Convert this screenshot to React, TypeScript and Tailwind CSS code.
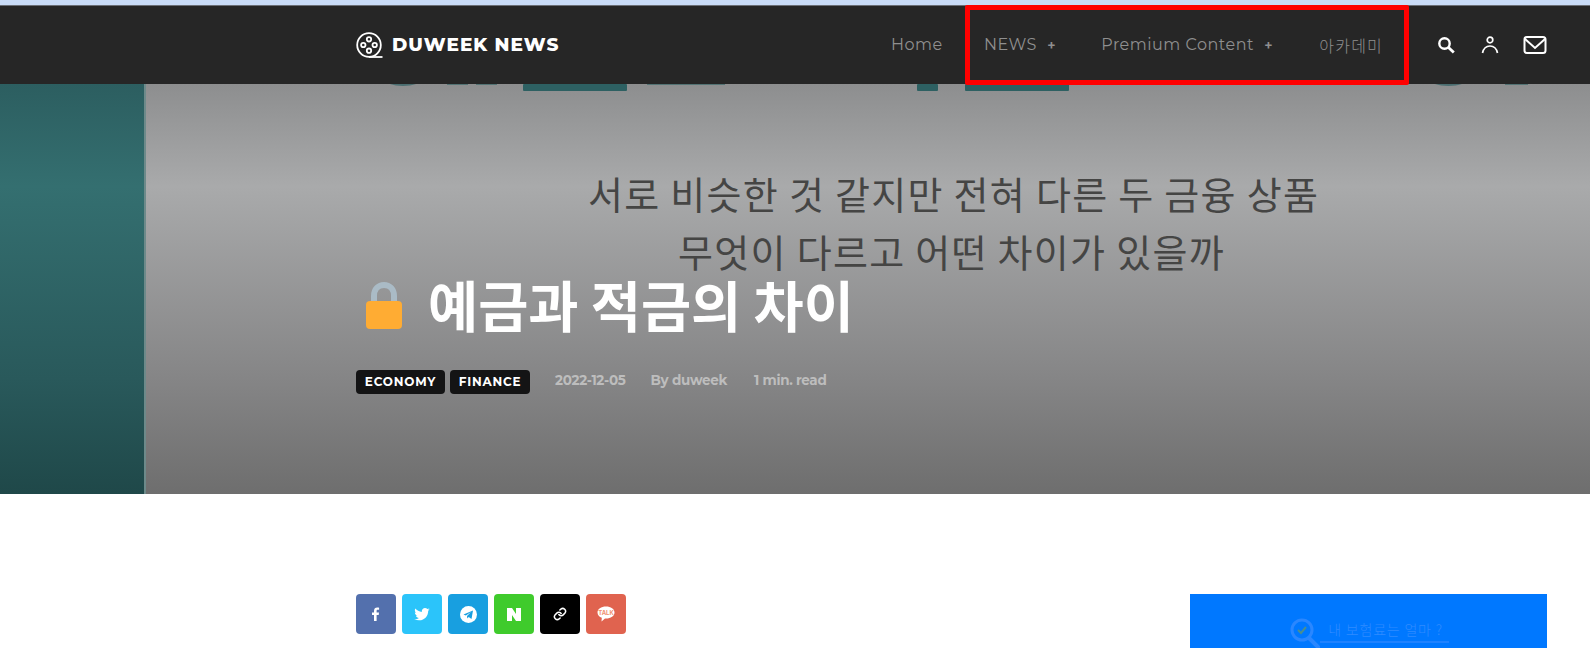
import React from "react";

function Logo() {
  return (
    <svg width="27" height="27" viewBox="0 0 27 27" fill="none" stroke="white" strokeWidth="1.8">
      <circle cx="13" cy="13" r="11.8" />
      <path d="M13 25H26.500" />
      <circle cx="13" cy="7.300" r="2.200" />
      <circle cx="13" cy="18.700" r="2.200" />
      <circle cx="7.300" cy="13" r="2.200" />
      <circle cx="18.700" cy="13" r="2.200" />
    </svg>
  );
}

function Social({ bg, children }: { bg: string; children: React.ReactNode }) {
  return <div className={`flex h-10 w-10 items-center justify-center rounded-sm ${bg}`}>{children}</div>;
}

export default function App() {
  return (
    <div className="flex h-[648px] w-[1590px] flex-col overflow-hidden bg-white font-['Inter','Noto_Sans_CJK_KR',sans-serif]">
      <div className="h-[5px] bg-[#c9dcf7]" />
      <div className="h-px bg-[#6b6f76]" />
      <header className="relative z-10 flex h-[78px] items-center bg-[#262626] pl-[356px]">
        <Logo />
        <span className="ml-[9px] font-['Montserrat','Inter',sans-serif] text-[18.5px] font-extrabold tracking-[1px] text-white">DUWEEK NEWS</span>
        <nav className="absolute left-[891px] top-0 flex h-full items-center text-[16px] tracking-[0.5px] text-[#8f8f8f] font-['Montserrat','Noto_Sans_CJK_KR',sans-serif]">
          <span className="mb-[1px] w-[52px]">Home</span>
          <div className="relative ml-[22px] flex h-full w-[444px] items-center pl-[19px]">
            <span className="mb-[1px]">NEWS</span>
            <span className="mb-[1px] ml-[10px] font-['Inter',sans-serif] text-[13px] font-bold">+</span>
            <span className="mb-[1px] ml-[45px]">Premium Content</span>
            <span className="mb-[1px] ml-[10px] font-['Inter',sans-serif] text-[13px] font-bold">+</span>
            <span className="mb-[1px] ml-[46px] font-['Noto_Sans_CJK_KR',sans-serif] text-[16px] font-light tracking-[1.200px]">아카데미</span>
            <div className="absolute -bottom-px -top-px left-0 right-0 rounded-[2px] border-[5px] border-[#ff0000]" />
          </div>
          <div className="ml-[28px] flex items-center">
            <svg width="18" height="18" viewBox="0 0 18 18" fill="none" stroke="white">
              <circle cx="7.500" cy="7.500" r="5.200" strokeWidth="2.400" />
              <path d="M11.500 11.500L16.800 16.500" strokeWidth="2.800" />
            </svg>
            <svg width="18" height="18" viewBox="0 0 18 18" fill="none" stroke="white" strokeWidth="1.700" className="ml-[26px]">
              <circle cx="9" cy="4" r="2.800" />
              <path d="M1.500 17C2.500 12.500 5.500 10 9 10S15.500 12.500 16.500 17" />
            </svg>
            <svg width="24" height="18" viewBox="0 0 24 18" fill="none" stroke="white" strokeWidth="2" className="ml-[24px]">
              <rect x="1.500" y="1" width="21" height="16" rx="2.500" />
              <path d="M2 3L12 12L22 3" />
            </svg>
          </div>
        </nav>
      </header>

      <section className="relative h-[410px] overflow-hidden bg-[linear-gradient(180deg,#8d8e8f_0%,#a9aaab_25%,#858586_72%,#6e6e6e_100%)]">
        <div className="absolute inset-y-0 left-0 w-[146px] border-r-2 border-[#6d8a8a] bg-[linear-gradient(180deg,#2c5e60_0%,#346f70_25%,#29595b_72%,#1f4849_100%)]" />
        <svg className="absolute left-0 top-0" width="1590" height="10" viewBox="0 0 1590 10" fill="#2d6062">
          <path d="M390 0H416C409 2.500 397 2.500 390 0Z" opacity="0.7" />
          <rect x="447" width="21" height="1" opacity="0.6" />
          <rect x="476" width="21" height="1" opacity="0.6" />
          <rect x="523" width="104" height="7" rx="1" />
          <rect x="647" width="78" height="1" opacity="0.6" />
          <rect x="917" width="21" height="7" rx="1" />
          <rect x="965" width="104" height="7" rx="1" />
          <path d="M1435 0H1462C1455 2.500 1442 2.500 1435 0Z" opacity="0.7" />
          <rect x="1505" width="23" height="1" opacity="0.6" />
        </svg>
        <div className="absolute left-[588px] top-[80px] w-[727px] text-center text-[38px] font-normal leading-[58px] tracking-[1.300px] text-[#454544] font-['Noto_Sans_CJK_KR',sans-serif]">
          <div className="whitespace-nowrap">서로 비슷한 것 같지만 전혀 다른 두 금융 상품</div>
          <div className="whitespace-nowrap">무엇이 다르고 어떤 차이가 있을까</div>
        </div>

        <div className="relative ml-[356px] flex h-full flex-col">
          <div className="mt-[190px] flex items-center">
            <svg width="38" height="48" viewBox="0 0 38 48" className="ml-[10px] mt-[4px]">
              <path d="M8 22V14C8 7 12.500 3 18 3S28 7 28 14V22" fill="none" stroke="#aabbc6" strokeWidth="6" />
              <rect x="0" y="19" width="36" height="28" rx="4" fill="#ffac33" />
            </svg>
            <h1 className="ml-[24px] whitespace-nowrap text-[54.5px] font-bold leading-[60px] text-white font-['Noto_Sans_CJK_KR',sans-serif]">예금과 적금의 차이</h1>
          </div>
          <div className="mt-[36px] flex items-center font-['Montserrat','Inter',sans-serif]">
            <span className="flex h-6 w-[89px] items-center justify-center rounded-[4px] bg-[#141415] text-[12px] font-bold tracking-[0.8px] text-white">ECONOMY</span>
            <span className="ml-[5px] flex h-6 w-[80px] items-center justify-center rounded-[4px] bg-[#141415] text-[12px] font-bold tracking-[0.8px] text-white">FINANCE</span>
            <span className="mb-[3px] ml-[25px] text-[13.500px] font-bold tracking-[-0.3px] text-[#bdbdbd]">2022-12-05</span>
            <span className="mb-[3px] ml-[25px] text-[13.500px] font-bold tracking-[-0.3px] text-[#bdbdbd]">By duweek</span>
            <span className="mb-[3px] ml-[27px] text-[13.500px] font-bold tracking-[-0.3px] text-[#bdbdbd]">1 min. read</span>
          </div>
        </div>
      </section>

      <div className="flex flex-1 pl-[356px] pt-[100px]">
        <div className="flex gap-[6px]">
          <Social bg="bg-[#5370ad]">
            <svg width="10" height="14" viewBox="0 0 10 14" fill="white"><path d="M3 14V8H1V5.600H3V4C3 1.700 4.300 .6 6.200 .6C7.100 .6 7.800 .7 8.100 .7V2.800H6.800C5.800 2.800 5.600 3.300 5.600 4V5.600H8L7.700 8H5.600V14Z" /></svg>
          </Social>
          <Social bg="bg-[#2bc4fa]">
            <svg width="16" height="13" viewBox="0 0 24 20" fill="white"><path d="M24 2.400c-.9.400-1.800.7-2.800.8 1-.6 1.800-1.600 2.200-2.700-1 .6-2 1-3.100 1.200C19.300.7 18 0 16.600 0c-2.700 0-4.900 2.200-4.900 4.900 0 .4 0 .8.100 1.100C7.700 5.800 4.100 3.900 1.700.9c-.4.700-.7 1.600-.7 2.500 0 1.700.9 3.200 2.200 4.100-.8 0-1.600-.2-2.200-.6v.1c0 2.400 1.700 4.400 3.900 4.800-.4.100-.8.200-1.300.2-.3 0-.6 0-.9-.100.6 2 2.400 3.400 4.600 3.400-1.700 1.300-3.800 2.100-6.100 2.100-.4 0-.8 0-1.200-.1C2.200 18.300 4.800 19 7.500 19c9.100 0 14-7.500 14-14v-.6c1-.7 1.800-1.600 2.500-2z" /></svg>
          </Social>
          <Social bg="bg-[#189fe0]">
            <svg width="17" height="17" viewBox="0 0 17 17"><circle cx="8.500" cy="8.500" r="8.500" fill="white" /><path d="M3.500 8.500L13 4.500L11.500 13L8.700 11L7.300 12.500L7 10L11 6L5.800 9.500Z" fill="#189fe0" /></svg>
          </Social>
          <Social bg="bg-[#3fcb2c]">
            <svg width="14" height="13" viewBox="0 0 14 13" fill="white"><path d="M0 0H5L9 6V0H14V13H9L5 7V13H0Z" /></svg>
          </Social>
          <Social bg="bg-black">
            <svg width="14" height="14" viewBox="0 0 24 24" fill="none" stroke="white" strokeWidth="2.600" strokeLinecap="round"><path d="M10 13a5 5 0 0 0 7.500.5l3-3a5 5 0 0 0-7-7l-1.700 1.700" /><path d="M14 11a5 5 0 0 0-7.500-.5l-3 3a5 5 0 0 0 7 7l1.700-1.700" /></svg>
          </Social>
          <Social bg="bg-[#e0634f]">
            <svg width="18" height="16" viewBox="0 0 18 16"><path d="M9 0.500C4.200 0.500 .5 3 .5 6.500C.5 9 2.300 10.800 4.800 11.800L4.500 15.500L8 12.500C8.300 12.500 8.700 12.500 9 12.500C13.800 12.500 17.500 10 17.500 6.500S13.800 .5 9 .5Z" fill="white" /><text x="9" y="8.500" textAnchor="middle" fontSize="6" fontWeight="700" fill="#f0906f" fontFamily="Inter, sans-serif">TALK</text></svg>
          </Social>
        </div>
        <div className="ml-auto mr-[43px] flex w-[357px] items-start justify-center bg-[#0078ff] pl-[2px] pt-[24px]">
          <svg width="32" height="30" viewBox="0 0 32 30" fill="none" className="-mr-[2px]">
            <circle cx="12" cy="12" r="10" stroke="#2a87ff" strokeWidth="3" />
            <path d="M8 12L11 15L16 9" stroke="#4a8f90" strokeWidth="2" />
            <path d="M19 20L28 29" stroke="#2a87ff" strokeWidth="4" strokeLinecap="round" />
          </svg>
          <span className="mt-[1px] border-b-2 border-[#1f82ff] pb-[1px] pl-[8px] pr-[6px] text-[14px] font-light leading-[21px] tracking-[0.800px] text-[#2f8bff] font-['Noto_Sans_CJK_KR',sans-serif]">내 보험료는 얼마 ?</span>
        </div>
      </div>
    </div>
  );
}
